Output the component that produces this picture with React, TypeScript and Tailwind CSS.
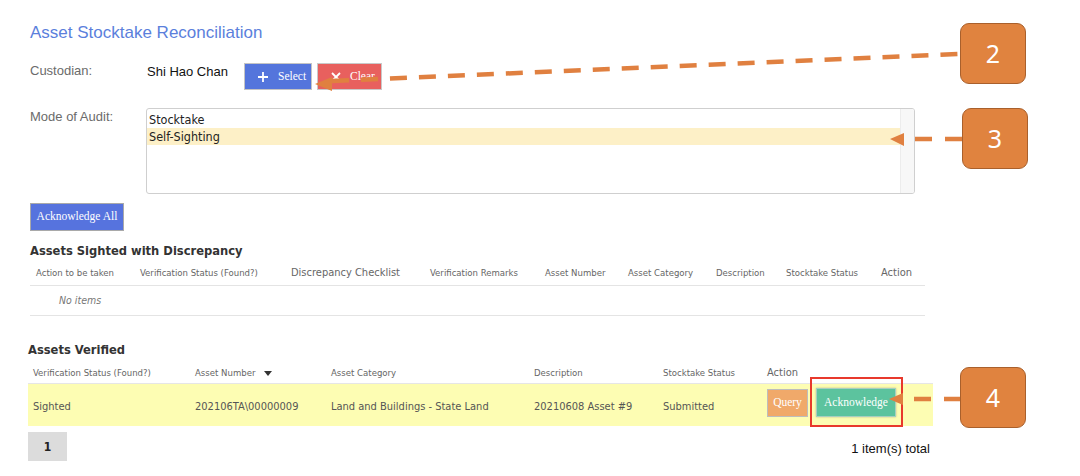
import React from "react";

const tableFont = "font-['DejaVu_Sans_Condensed','DejaVu_Sans',sans-serif]";

function Badge({ n, pos }: { n: string; pos: string }) {
  return (
    <div
      className={`absolute ${pos} w-[66px] h-[61px] rounded-[9px] bg-[#e0833f] border border-[#a9602c] flex items-center justify-center text-white text-[25px] font-['Noto_Sans',sans-serif]`}
    >
      {n}
    </div>
  );
}

export default function App() {
  return (
    <div className="relative w-[1080px] h-[476px] overflow-hidden bg-white font-['Liberation_Sans',Arial,sans-serif]">
      <div className="pl-[30px] pt-[23px]">
        <h1 className="text-[17px] leading-[20px] text-[#5b7fdc]">Asset Stocktake Reconciliation</h1>

        <div className="mt-[20px] flex items-start h-[27px]">
          <div className="w-[117px] text-[13px] leading-[16px] text-[#6b6b6b]">Custodian:</div>
          <div className="w-[97px] mt-[1px] text-[13px] leading-[16px] text-[#111]">Shi Hao Chan</div>
          <button className="flex items-center w-[68px] h-[27px] pl-[13px] bg-[#5475dc] border border-[#c4c4c4] text-white font-['Liberation_Serif',serif] text-[11.5px]">
            <svg width="10" height="10" viewBox="0 0 10 10">
              <path d="M5 0V10M0 5H10" stroke="white" strokeWidth="1.8" />
            </svg>
            <span className="ml-[10px]">Select</span>
          </button>
          <button className="ml-[5px] flex items-center w-[65px] h-[27px] pl-[13px] bg-[#e8605e] border border-[#c9c9c9] text-white font-['Liberation_Serif',serif] text-[11.5px]">
            <svg width="10" height="10" viewBox="0 0 10 10">
              <path d="M1 1L9 9M9 1L1 9" stroke="white" strokeWidth="1.8" />
            </svg>
            <span className="ml-[9px]">Clear</span>
          </button>
        </div>

        <div className="mt-[18px] flex items-start">
          <div className="w-[116px] mt-[1px] text-[13px] leading-[16px] text-[#6b6b6b]">Mode of Audit:</div>
          <div className="w-[769px] h-[86px] border border-[#cfcfcf] rounded-[3px] flex overflow-hidden">
            <div className={`flex-1 pt-[2px] text-[12.5px] leading-[17px] text-[#222] ${tableFont}`}>
              <div className="pl-[2px]">Stocktake</div>
              <div className="pl-[2px] bg-[#fdf0c7]">Self-Sighting</div>
            </div>
            <div className="w-[14px] bg-[#f7f7f7] border-l border-[#ececec]" />
          </div>
        </div>

        <button className="mt-[9px] block w-[94px] h-[28px] bg-[#5673de] border border-[#a9a9a9] text-white font-['Liberation_Serif',serif] text-[11.5px]">
          Acknowledge All
        </button>

        <h2 className={`mt-[12px] text-[12.8px] leading-[16px] font-bold text-[#333] ${tableFont}`}>
          Assets Sighted with Discrepancy
        </h2>
        <div className={`w-[895px] ${tableFont}`}>
          <div className="grid grid-cols-[104px_151px_139px_115px_83px_88px_70px_95px_1fr] h-[27px] pt-[2px] items-center border-b border-[#e4e4e4] text-[9.5px] text-[#666] whitespace-nowrap">
            <div className="pl-[6px]">Action to be taken</div>
            <div className="pl-[6px]">Verification Status (Found?)</div>
            <div className="pl-[6px] text-[11px]">Discrepancy Checklist</div>
            <div className="pl-[6px]">Verification Remarks</div>
            <div className="pl-[6px]">Asset Number</div>
            <div className="pl-[6px]">Asset Category</div>
            <div className="pl-[6px]">Description</div>
            <div className="pl-[6px]">Stocktake Status</div>
            <div className="pl-[6px] text-[11px]">Action</div>
          </div>
          <div className="h-[30px] flex items-center pl-[29px] border-b border-[#e4e4e4] italic text-[10.5px] text-[#777]">
            No items
          </div>
        </div>

        <div className={`mt-[26px] -ml-[2px] ${tableFont}`}>
          <h2 className="text-[12.8px] leading-[16px] font-bold text-[#333]">Assets Verified</h2>
          <div className="w-[905px]">
            <div className="grid grid-cols-[162px_136px_203px_129px_104px_1fr] h-[26px] pt-[5px] items-center border-b border-[#e6e6e6] text-[9.5px] text-[#666] whitespace-nowrap">
              <div className="pl-[5px]">Verification Status (Found?)</div>
              <div className="pl-[5px] flex items-center">
                <span>Asset Number</span>
                <svg className="ml-[9px]" width="8" height="5" viewBox="0 0 8 5">
                  <path d="M0 0H8L4 5Z" fill="#333" />
                </svg>
              </div>
              <div className="pl-[5px]">Asset Category</div>
              <div className="pl-[5px]">Description</div>
              <div className="pl-[5px]">Stocktake Status</div>
              <div className="pl-[5px] text-[11px]">Action</div>
            </div>
            <div className="grid grid-cols-[162px_136px_203px_129px_104px_1fr] h-[42px] bg-[#fdfdb3] text-[11px] text-[#555] whitespace-nowrap">
              <div className="pl-[5px] pt-[4px] flex items-center">Sighted</div>
              <div className="pl-[5px] pt-[4px] flex items-center">202106TA\00000009</div>
              <div className="pl-[5px] pt-[4px] flex items-center">Land and Buildings - State Land</div>
              <div className="pl-[5px] pt-[4px] flex items-center">20210608 Asset #9</div>
              <div className="pl-[5px] pt-[4px] flex items-center">Submitted</div>
              <div className="pl-[5px] pt-[4px] flex items-start gap-[8px]">
                <button className="w-[41px] h-[28px] mt-[1px] bg-[#f0a96a] border border-[#bdbdbd] text-white font-['Liberation_Serif',serif] text-[11.5px]">
                  Query
                </button>
                <button className="w-[80px] h-[29px] bg-[#5cc39e] border border-[#a8cfc0] shadow-[0_0_2px_rgba(0,0,0,0.25)] text-white font-['Liberation_Serif',serif] text-[11.5px]">
                  Acknowledge
                </button>
              </div>
            </div>
            <div className="mt-[6px] flex justify-between items-center">
              <div className="w-[39px] h-[29px] bg-[#dcdcdc] flex items-center justify-center font-bold text-[12px] text-[#222]">
                1
              </div>
              <div className="mr-[3px] mt-[5px] text-[13px] text-[#111] font-['Liberation_Sans',Arial,sans-serif]">
                1 item(s) total
              </div>
            </div>
          </div>
        </div>
      </div>

      {/* highlight box */}
      <div className="absolute left-[810px] top-[377px] w-[93px] h-[50px] border-2 border-[#e8392c]" />

      {/* annotation lines */}
      <svg className="absolute left-0 top-0 pointer-events-none" width="1080" height="476" viewBox="0 0 1080 476">
        <g stroke="#e08040" strokeWidth="4.5" fill="none">
          <path d="M332 81 L960 54" strokeDasharray="17 12" />
          <path d="M915 139 H932 M945 139 H962" />
          <path d="M914 399 H931 M944 399 H960" />
        </g>
        <g fill="#e08040">
          <path d="M315 84 L332 77 L332 91 Z" />
          <path d="M890 139 L904 133 L904 146 Z" />
          <path d="M889 399 L903 393 L903 405 Z" />
        </g>
      </svg>

      <Badge n="2" pos="left-[960px] top-[23px]" />
      <Badge n="3" pos="left-[962px] top-[108px]" />
      <Badge n="4" pos="left-[960px] top-[367px]" />
    </div>
  );
}
